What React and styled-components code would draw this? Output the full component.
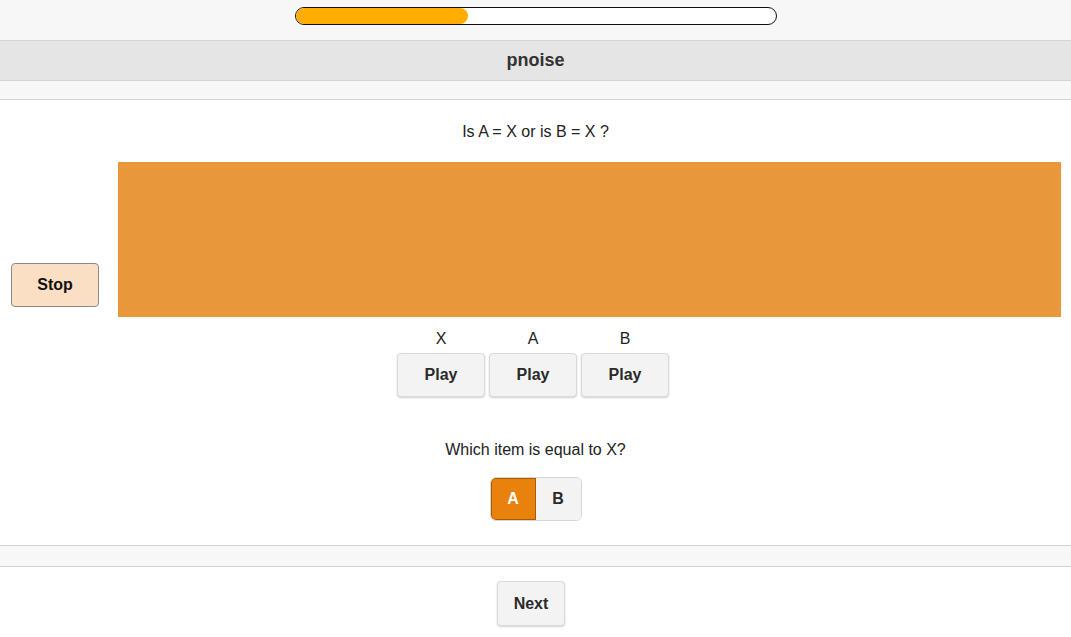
import React, { useState } from 'react';
import styled, { createGlobalStyle } from 'styled-components';

const GlobalStyle = createGlobalStyle`
  html, body {
    margin: 0;
    padding: 0;
    background: #ffffff;
    font-family: 'Liberation Sans', Arial, sans-serif;
    color: #222;
  }
`;

const Page = styled.div`
  width: 1071px;
  min-height: 637px;
  display: flex;
  flex-direction: column;
`;

const TopBar = styled.div`
  height: 40px;
  background: #f7f7f7;
  display: flex;
  justify-content: center;
  padding-top: 7px;
  box-sizing: border-box;
`;

const Progress = styled.div`
  width: 482px;
  height: 18px;
  border: 1px solid #111;
  border-radius: 9px;
  background: #fff;
  box-sizing: border-box;
  overflow: hidden;
`;

const ProgressFill = styled.div`
  height: 100%;
  background: #ffad00;
  border-radius: 9px;
`;

const Header = styled.div`
  height: 41px;
  background: #e5e5e5;
  border-top: 1px solid #d4d4d4;
  border-bottom: 1px solid #d4d4d4;
  box-sizing: border-box;
  display: flex;
  align-items: center;
  justify-content: center;
  font-size: 18px;
  font-weight: 700;
  color: #333;
`;

const Strip = styled.div`
  height: ${({ h }) => h}px;
  background: #f7f7f7;
  border-bottom: 1px solid #d4d4d4;
  border-top: ${({ top }) => (top ? '1px solid #d4d4d4' : 'none')};
  box-sizing: border-box;
`;

const Content = styled.div`
  height: 445px;
  display: flex;
  flex-direction: column;
  align-items: center;
`;

const Question = styled.div`
  font-size: 16px;
  line-height: 18px;
  margin-top: 23px;
  margin-bottom: 21px;
`;

const Stage = styled.div`
  width: 100%;
  display: grid;
  grid-template-columns: 118px 1fr;
  grid-template-rows: auto auto;
`;

const StopCell = styled.div`
  grid-column: 1;
  grid-row: 1 / span 2;
  display: flex;
  align-items: center;
  padding-left: 11px;
`;

const StopButton = styled.button`
  width: 88px;
  height: 44px;
  background: #fbdfc5;
  border: 1px solid #8a8a8a;
  border-radius: 4px;
  font-family: inherit;
  font-size: 16px;
  font-weight: 700;
  color: #111;
  cursor: pointer;
`;

const Waveform = styled.div`
  grid-column: 2;
  grid-row: 1;
  height: 155px;
  margin-right: 10px;
  background: #e8983a;
`;

const Players = styled.div`
  grid-column: 1 / -1;
  grid-row: 2;
  display: flex;
  justify-content: center;
  gap: 4px;
  padding-top: 13px;
  padding-right: 5px;
  padding-bottom: 11px;
`;

const Player = styled.div`
  display: flex;
  flex-direction: column;
  align-items: center;
`;

const Label = styled.div`
  font-size: 16px;
  line-height: 17px;
  color: #222;
  margin-bottom: 6px;
`;

const GrayButton = styled.button`
  width: ${({ w }) => w}px;
  height: ${({ h }) => h}px;
  background: #f3f3f3;
  border: 1px solid #dadada;
  border-radius: 4px;
  box-shadow: 0 1px 2px rgba(0, 0, 0, 0.18);
  font-family: inherit;
  font-size: 16px;
  font-weight: 700;
  color: #2a2a2a;
  cursor: pointer;
  padding: 0;
`;

const Prompt = styled.div`
  font-size: 16px;
  line-height: 18px;
  margin-top: 33px;
  margin-bottom: 18px;
`;

const Toggle = styled.div`
  display: flex;
  border-radius: 6px;
  overflow: hidden;
  border: 1px solid #d6d6d6;
`;

const ToggleOption = styled.button`
  width: 45px;
  height: 42px;
  border: none;
  padding: 0;
  font-family: inherit;
  font-size: 16px;
  font-weight: 700;
  cursor: pointer;
  background: ${({ active }) => (active ? '#e8820c' : '#f3f3f3')};
  color: ${({ active }) => (active ? '#fff' : '#2a2a2a')};
  box-shadow: ${({ active }) => (active ? 'inset 0 0 0 1px #a85d05' : 'none')};
  border-radius: ${({ active }) => (active ? '5px 0 0 5px' : '0')};
`;

const Footer = styled.div`
  display: flex;
  justify-content: center;
  padding-top: 14px;
  padding-right: 9px;
`;

export default function App() {
  const [choice, setChoice] = useState('A');
  const players = ['X', 'A', 'B'];

  return (
    <Page>
      <GlobalStyle />
      <TopBar>
        <Progress>
          <ProgressFill style={{ width: '36%' }} />
        </Progress>
      </TopBar>
      <Header>pnoise</Header>
      <Strip h={19} />
      <Content>
        <Question>Is A = X or is B = X ?</Question>
        <Stage>
          <StopCell>
            <StopButton>Stop</StopButton>
          </StopCell>
          <Waveform />
          <Players>
            {players.map((p) => (
              <Player key={p}>
                <Label>{p}</Label>
                <GrayButton w={88} h={44}>Play</GrayButton>
              </Player>
            ))}
          </Players>
        </Stage>
        <Prompt>Which item is equal to X?</Prompt>
        <Toggle>
          {['A', 'B'].map((opt) => (
            <ToggleOption key={opt} active={choice === opt} onClick={() => setChoice(opt)}>
              {opt}
            </ToggleOption>
          ))}
        </Toggle>
      </Content>
      <Strip h={22} top />
      <Footer>
        <GrayButton w={68} h={45}>Next</GrayButton>
      </Footer>
    </Page>
  );
}
